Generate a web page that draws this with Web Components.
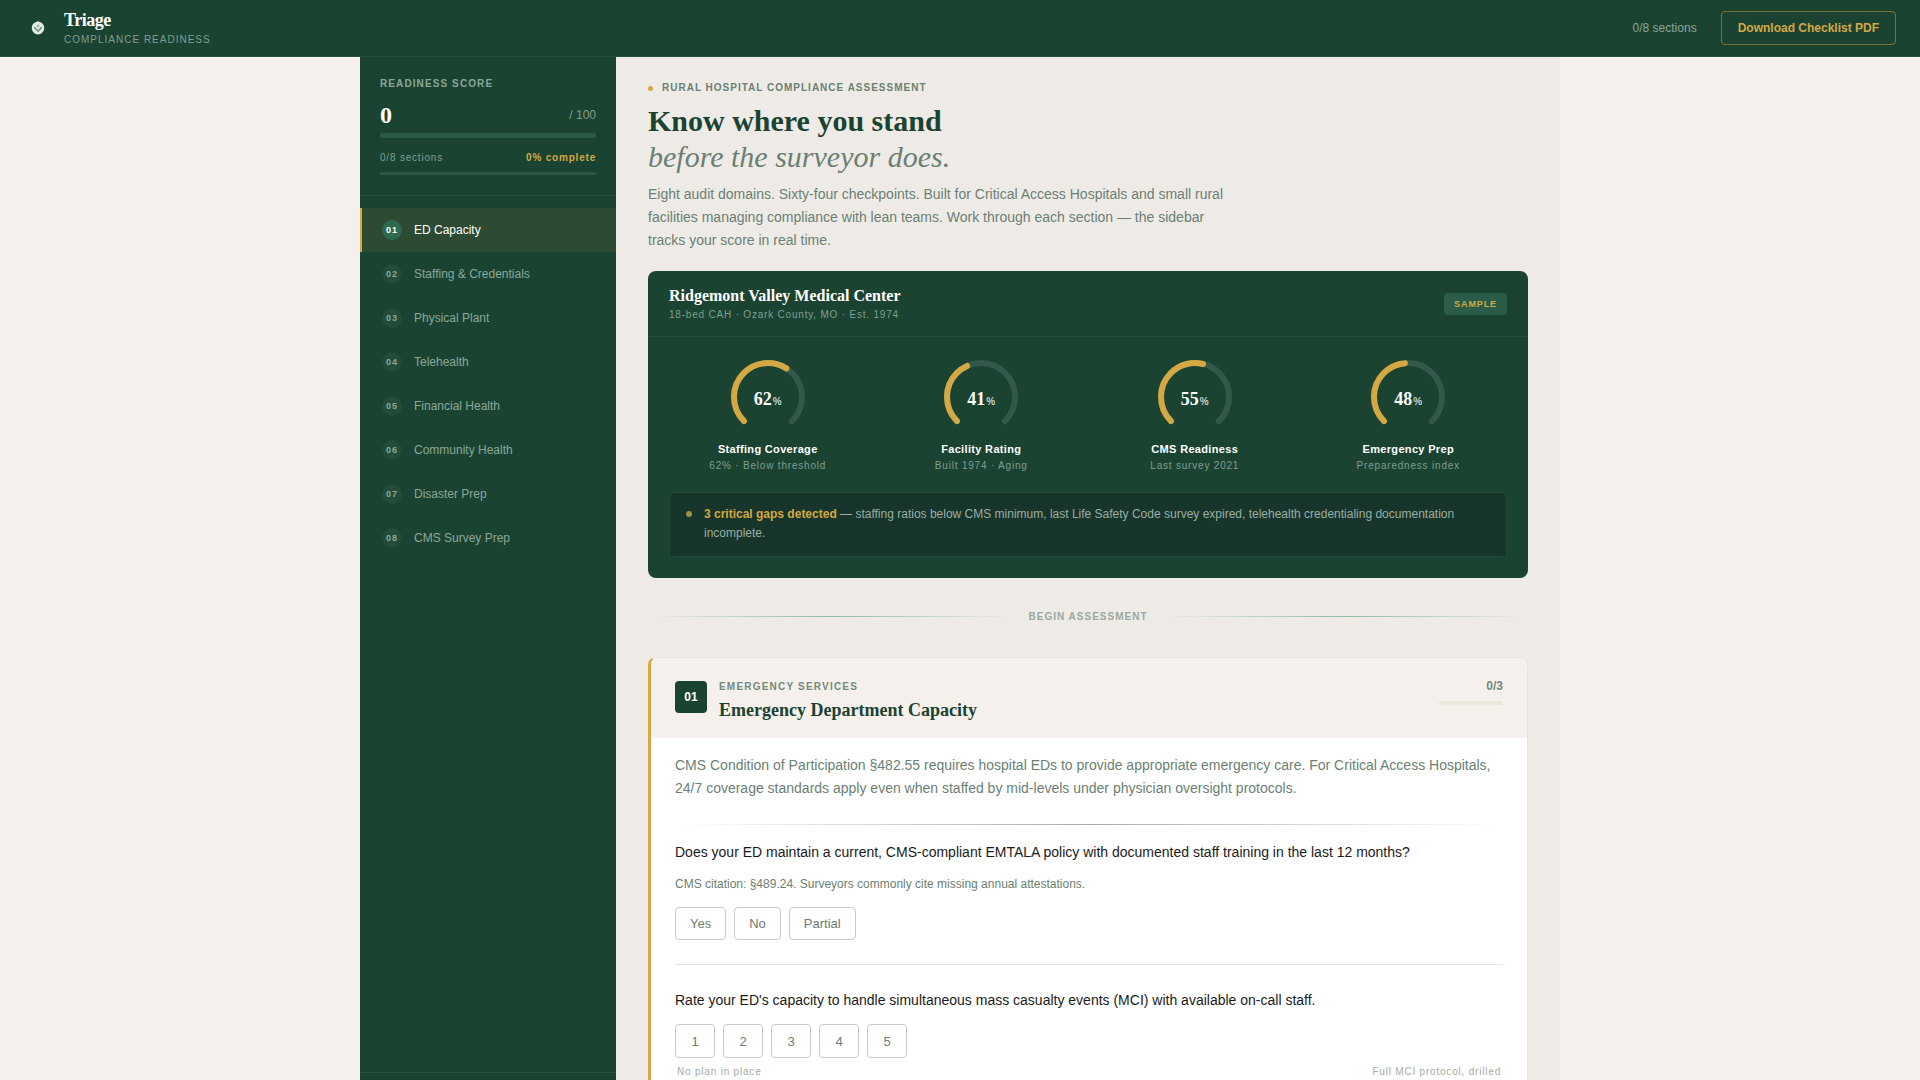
<!DOCTYPE html>
<html lang="en">
<head>
<meta charset="utf-8">
<title>Triage</title>
<style>
  html, body { margin: 0; height: 100%; overflow: hidden; }
  body {
    background: #f5f0eb;
    font-family: "Liberation Sans", Arial, sans-serif;
    display: flex;
    flex-direction: column;
  }
  .shell {
    flex: 1;
    min-height: 0;
    width: 1200px;
    margin: 0 auto;
    display: flex;
  }
</style>
</head>
<body>
  <app-header sections="0/8 sections"></app-header>
  <div class="shell">
    <side-bar>
      <score-panel></score-panel>
      <nav-item num="01" active>ED Capacity</nav-item>
      <nav-item num="02">Staffing &amp; Credentials</nav-item>
      <nav-item num="03">Physical Plant</nav-item>
      <nav-item num="04">Telehealth</nav-item>
      <nav-item num="05">Financial Health</nav-item>
      <nav-item num="06">Community Health</nav-item>
      <nav-item num="07">Disaster Prep</nav-item>
      <nav-item num="08">CMS Survey Prep</nav-item>
    </side-bar>
    <main-area>
      <hero-intro></hero-intro>
      <facility-card>
        <gauge-dial value="62" label="Staffing Coverage" note="62% · Below threshold"></gauge-dial>
        <gauge-dial value="41" label="Facility Rating" note="Built 1974 · Aging"></gauge-dial>
        <gauge-dial value="55" label="CMS Readiness" note="Last survey 2021"></gauge-dial>
        <gauge-dial value="48" label="Emergency Prep" note="Preparedness index"></gauge-dial>
      </facility-card>
      <section-rule>BEGIN ASSESSMENT</section-rule>
      <section-card num="01" eyebrow="EMERGENCY SERVICES" heading="Emergency Department Capacity" count="0/3">
        <p slot="intro">CMS Condition of Participation §482.55 requires hospital EDs to provide appropriate emergency care. For Critical Access Hospitals, 24/7 coverage standards apply even when staffed by mid-levels under physician oversight protocols.</p>
        <check-question text="Does your ED maintain a current, CMS-compliant EMTALA policy with documented staff training in the last 12 months?" hint="CMS citation: §489.24. Surveyors commonly cite missing annual attestations." options="Yes,No,Partial"></check-question>
        <check-question scale text="Rate your ED's capacity to handle simultaneous mass casualty events (MCI) with available on-call staff." options="1,2,3,4,5" low="No plan in place" high="Full MCI protocol, drilled"></check-question>
      </section-card>
    </main-area>
  </div>

<script>
const appHeaderTemplate = document.createElement("template");
appHeaderTemplate.innerHTML = `
  <style>
    :host {
      display: flex;
      flex: none;
      align-items: center;
      height: 56px;
      padding: 0 24px;
      background: #1b4332;
      border-bottom: 1px solid #27503e;
    }
    .logo { width: 28px; height: 28px; display: flex; align-items: center; justify-content: center; margin-right: 12px; }
    .brand { flex: 1; }
    .name {
      font: bold 18px/20px "Liberation Serif", "Times New Roman", serif;
      letter-spacing: -0.5px;
      color: #fff;
    }
    .sub { font-size: 10px; line-height: 14px; letter-spacing: 1px; color: #7f9f8f; margin-top: 3px; }
    .sections { font-size: 12px; color: #8aa898; margin-right: 24px; }
    button {
      font: bold 12px "Liberation Sans", Arial, sans-serif;
      height: 34px;
      padding: 0 16px;
      color: #d4a843;
      background: transparent;
      border: 1px solid rgba(212, 168, 67, 0.5);
      border-radius: 4px;
    }
  </style>
  <div class="logo">
    <svg width="14" height="14" viewBox="0 0 14 14">
      <path d="M7 0.3 L9.6 1.2 C12 2 13.2 4.4 13.2 7 C13.2 10.6 10.4 13.4 7 13.4 C3.6 13.4 0.8 10.6 0.8 7 C0.8 4.4 2 2 4.4 1.2 Z" fill="#e3ebe0"/>
      <path d="M3.2 6.2 L7 10.2 L10.8 6.2" fill="none" stroke="#5f8c76" stroke-width="1.4"/>
      <circle cx="7" cy="5" r="1.5" fill="#9db8a9"/>
    </svg>
  </div>
  <div class="brand">
    <div class="name">Triage</div>
    <div class="sub">COMPLIANCE READINESS</div>
  </div>
  <span class="sections"></span>
  <button>Download Checklist PDF</button>
`;

class AppHeader extends HTMLElement {
  constructor() {
    super();
    this.attachShadow({ mode: "open" });
    this.shadowRoot.appendChild(appHeaderTemplate.content.cloneNode(true));
    this.shadowRoot.querySelector(".sections").textContent = this.getAttribute("sections");
  }
}
customElements.define("app-header", AppHeader);

const sideBarTemplate = document.createElement("template");
sideBarTemplate.innerHTML = `
  <style>
    :host {
      display: flex;
      flex-direction: column;
      flex: none;
      width: 256px;
      background: #1b4332;
    }
    .nav { flex: 1; }
    .foot { height: 8px; border-top: 1px solid #2a5341; box-sizing: border-box; flex: none; }
  </style>
  <div class="nav"><slot></slot></div>
  <div class="foot"></div>
`;

class SideBar extends HTMLElement {
  constructor() {
    super();
    this.attachShadow({ mode: "open" });
    this.shadowRoot.appendChild(sideBarTemplate.content.cloneNode(true));
  }
}
customElements.define("side-bar", SideBar);

const scorePanelTemplate = document.createElement("template");
scorePanelTemplate.innerHTML = `
  <style>
    :host {
      display: block;
      padding: 21px 20px 0;
      height: 139px;
      box-sizing: border-box;
      margin-bottom: 12px;
      border-bottom: 1px solid #27503e;
    }
    .label { font-size: 10px; line-height: 12px; font-weight: bold; letter-spacing: 1.1px; color: #8aa898; }
    .score { display: flex; justify-content: space-between; align-items: center; margin-top: 11px; height: 28px; }
    .score b { font: bold 24px/28px "Liberation Serif", serif; color: #fff; }
    .score span { font-size: 12px; color: #7f9f8f; }
    .track { background: #2a5a45; border-radius: 3px; }
    .t1 { height: 5px; margin-top: 4px; }
    .meta { display: flex; justify-content: space-between; font-size: 10px; line-height: 12px; letter-spacing: 0.8px; color: #7f9f8f; margin-top: 14px; }
    .meta b { color: #d4a843; }
    .t2 { height: 3px; margin-top: 8px; }
  </style>
  <div class="label">READINESS SCORE</div>
  <div class="score"><b>0</b><span>/ 100</span></div>
  <div class="track t1"></div>
  <div class="meta"><span>0/8 sections</span><b>0% complete</b></div>
  <div class="track t2"></div>
`;

class ScorePanel extends HTMLElement {
  constructor() {
    super();
    this.attachShadow({ mode: "open" });
    this.shadowRoot.appendChild(scorePanelTemplate.content.cloneNode(true));
  }
}
customElements.define("score-panel", ScorePanel);

const navItemTemplate = document.createElement("template");
navItemTemplate.innerHTML = `
  <style>
    :host {
      display: flex;
      align-items: center;
      height: 44px;
      padding-left: 20px;
      border-left: 2px solid transparent;
      font-size: 12px;
      color: #8aa898;
    }
    :host([active]) {
      border-left-color: #d4a843;
      background: #2d4a32;
      color: #fff;
    }
    .num {
      width: 20px;
      height: 20px;
      margin-right: 12px;
      border-radius: 50%;
      display: flex;
      align-items: center;
      justify-content: center;
      font-size: 9px;
      font-weight: bold;
      letter-spacing: 0.9px;
      background: #234d3a;
      color: #8aa898;
    }
    :host([active]) .num { background: #2d6a4f; color: #fff; }
  </style>
  <span class="num"></span><slot></slot>
`;

class NavItem extends HTMLElement {
  constructor() {
    super();
    this.attachShadow({ mode: "open" });
    this.shadowRoot.appendChild(navItemTemplate.content.cloneNode(true));
    this.shadowRoot.querySelector(".num").textContent = this.getAttribute("num");
  }
}
customElements.define("nav-item", NavItem);

const mainAreaTemplate = document.createElement("template");
mainAreaTemplate.innerHTML = `
  <style>
    :host {
      display: block;
      flex: 1;
      min-width: 0;
      overflow: hidden;
      padding: 25px 32px 0;
      background: #eeebe6;
    }
  </style>
  <slot></slot>
`;

class MainArea extends HTMLElement {
  constructor() {
    super();
    this.attachShadow({ mode: "open" });
    this.shadowRoot.appendChild(mainAreaTemplate.content.cloneNode(true));
  }
}
customElements.define("main-area", MainArea);

const heroIntroTemplate = document.createElement("template");
heroIntroTemplate.innerHTML = `
  <style>
    :host { display: block; margin-bottom: 19px; }
    .eyebrow {
      display: flex;
      align-items: center;
      gap: 9px;
      font-size: 10px;
      line-height: 12px;
      font-weight: bold;
      letter-spacing: 1px;
      color: #6b7f74;
    }
    .eyebrow i { width: 5px; height: 5px; border-radius: 50%; background: #d4a843; }
    h1 {
      margin: 9px 0 8px;
      font: bold 30px/36px "Liberation Serif", serif;
      color: #1b4332;
    }
    h1 em { display: block; font-weight: normal; color: #6b7f74; }
    p { margin: 0; max-width: 580px; font-size: 14px; line-height: 23px; color: #6b7f74; }
  </style>
  <div class="eyebrow"><i></i>RURAL HOSPITAL COMPLIANCE ASSESSMENT</div>
  <h1>Know where you stand<em>before the surveyor does.</em></h1>
  <p>Eight audit domains. Sixty-four checkpoints. Built for Critical Access Hospitals and small rural facilities managing compliance with lean teams. Work through each section — the sidebar tracks your score in real time.</p>
`;

class HeroIntro extends HTMLElement {
  constructor() {
    super();
    this.attachShadow({ mode: "open" });
    this.shadowRoot.appendChild(heroIntroTemplate.content.cloneNode(true));
  }
}
customElements.define("hero-intro", HeroIntro);

const facilityCardTemplate = document.createElement("template");
facilityCardTemplate.innerHTML = `
  <style>
    :host {
      display: block;
      height: 307px;
      box-sizing: border-box;
      background: #1b4332;
      border-radius: 8px;
      color: #fff;
    }
    .head {
      display: flex;
      align-items: center;
      justify-content: space-between;
      height: 65px;
      padding: 0 21px;
      border-bottom: 1px solid #27503e;
    }
    h2 { margin: 0; font: bold 16px/20px "Liberation Serif", serif; color: #fff; }
    .meta { font-size: 10px; line-height: 14px; letter-spacing: 0.8px; color: #7f9f8f; margin-top: 2px; }
    .tag {
      font-size: 9px;
      font-weight: bold;
      letter-spacing: 0.9px;
      line-height: 12px;
      padding: 5px 10px;
      color: #d4a843;
      background: #2a5c47;
      border-radius: 4px;
    }
    .gauges {
      display: grid;
      grid-template-columns: repeat(4, 1fr);
      gap: 16px;
      padding: 20px 21px 0;
    }
    .alert {
      display: flex;
      margin: 19px 21px 0;
      padding: 12px 16px 0 14px;
      height: 65px;
      box-sizing: border-box;
      background: #17352a;
      border: 1px solid #24483a;
      border-radius: 4px;
      font-size: 12px;
      line-height: 19px;
      color: #9aaea5;
    }
    .alert i {
      flex: none;
      width: 6px;
      height: 6px;
      margin: 6px 12px 0 2px;
      border-radius: 50%;
      background: #a08f4a;
    }
    .alert b { color: #d4a843; }
  </style>
  <div class="head">
    <div>
      <h2>Ridgemont Valley Medical Center</h2>
      <div class="meta">18-bed CAH · Ozark County, MO · Est. 1974</div>
    </div>
    <span class="tag">SAMPLE</span>
  </div>
  <div class="gauges"><slot></slot></div>
  <div class="alert"><i></i><span><b>3 critical gaps detected</b> — staffing ratios below CMS minimum, last Life Safety Code survey expired, telehealth credentialing documentation incomplete.</span></div>
`;

class FacilityCard extends HTMLElement {
  constructor() {
    super();
    this.attachShadow({ mode: "open" });
    this.shadowRoot.appendChild(facilityCardTemplate.content.cloneNode(true));
  }
}
customElements.define("facility-card", FacilityCard);

const gaugeDialTemplate = document.createElement("template");
gaugeDialTemplate.innerHTML = `
  <style>
    :host { display: block; text-align: center; }
    .dial { position: relative; width: 80px; height: 80px; margin: 0 auto; }
    svg { display: block; transform: rotate(135deg); }
    circle { fill: none; stroke-width: 6; stroke-linecap: round; }
    .bg { stroke: #34594a; }
    .fg { stroke: #d4a843; }
    .value {
      position: absolute;
      left: 0;
      right: 0;
      top: 31px;
      font: bold 18px/22px "Liberation Serif", serif;
      color: #fff;
    }
    .value small { font: bold 10px "Liberation Sans", Arial, sans-serif; color: #c3d4ca; margin-left: 1px; }
    .label { font-size: 11px; line-height: 14px; font-weight: bold; letter-spacing: 0.33px; color: #fff; margin-top: 5px; }
    .note { font-size: 10px; line-height: 14px; letter-spacing: 0.8px; color: #7f9f8f; margin-top: 3px; }
  </style>
  <div class="dial">
    <svg width="80" height="80" viewBox="0 0 80 80">
      <circle class="bg" cx="40" cy="40" r="34"></circle>
      <circle class="fg" cx="40" cy="40" r="34"></circle>
    </svg>
    <div class="value"></div>
  </div>
  <div class="label"></div>
  <div class="note"></div>
`;

class GaugeDial extends HTMLElement {
  constructor() {
    super();
    this.attachShadow({ mode: "open" });
    this.shadowRoot.appendChild(gaugeDialTemplate.content.cloneNode(true));
    this.render();
  }

  render() {
    const root = this.shadowRoot;
    const value = Number(this.getAttribute("value"));
    const full = 2 * Math.PI * 34;
    const arc = full * 0.75;
    root.querySelector(".bg").setAttribute("stroke-dasharray", `${ arc } ${ full }`);
    root.querySelector(".fg").setAttribute("stroke-dasharray", `${ arc * value / 100 } ${ full }`);
    root.querySelector(".value").innerHTML = `${ value }<small>%</small>`;
    root.querySelector(".label").textContent = this.getAttribute("label");
    root.querySelector(".note").textContent = this.getAttribute("note");
  }
}
customElements.define("gauge-dial", GaugeDial);

const sectionRuleTemplate = document.createElement("template");
sectionRuleTemplate.innerHTML = `
  <style>
    :host {
      display: flex;
      align-items: center;
      gap: 16px;
      height: 12px;
      margin: 32px 0 35px;
      font-size: 10px;
      font-weight: bold;
      letter-spacing: 1px;
      color: #9aa89f;
    }
    i { flex: 1; height: 1px; background: linear-gradient(90deg, transparent, #8fbb9f, transparent); }
  </style>
  <i></i><slot></slot><i></i>
`;

class SectionRule extends HTMLElement {
  constructor() {
    super();
    this.attachShadow({ mode: "open" });
    this.shadowRoot.appendChild(sectionRuleTemplate.content.cloneNode(true));
  }
}
customElements.define("section-rule", SectionRule);

const sectionCardTemplate = document.createElement("template");
sectionCardTemplate.innerHTML = `
  <style>
    :host {
      display: block;
      background: #fff;
      border: 1px solid #e9e5de;
      border-left: 3px solid #d4a843;
      border-radius: 8px;
    }
    .head {
      display: flex;
      align-items: flex-start;
      gap: 12px;
      height: 80px;
      padding: 23px 24px 0;
      box-sizing: border-box;
      background: #f5f0eb;
      border-radius: 7px 7px 0 0;
    }
    .badge {
      flex: none;
      width: 32px;
      height: 32px;
      border-radius: 4px;
      display: flex;
      align-items: center;
      justify-content: center;
      font-size: 12px;
      font-weight: bold;
      color: #fff;
      background: #1b4332;
    }
    .titles { flex: 1; }
    .eyebrow { font-size: 10px; line-height: 12px; font-weight: bold; letter-spacing: 1.2px; color: #748a7e; }
    h3 { margin: 6px 0 0; font: bold 18px/22px "Liberation Serif", serif; color: #1b4332; }
    .progress { width: 64px; text-align: right; }
    .count { font-size: 12px; line-height: 12px; font-weight: bold; color: #748a7e; margin-top: -1px; }
    .bar { height: 4px; margin-top: 9px; background: #ebe5da; border-radius: 2px; }
    .body { padding: 16px 24px 0; }
    ::slotted(p) {
      margin: 0 0 24px;
      font-size: 14px;
      line-height: 23px;
      color: #6b7f74;
    }
    .rule { height: 1px; margin-bottom: 17px; background: linear-gradient(90deg, transparent, #a8aca8, transparent); }
  </style>
  <div class="head">
    <div class="badge"></div>
    <div class="titles">
      <div class="eyebrow"></div>
      <h3></h3>
    </div>
    <div class="progress">
      <div class="count"></div>
      <div class="bar"></div>
    </div>
  </div>
  <div class="body">
    <slot name="intro"></slot>
    <div class="rule"></div>
    <slot></slot>
  </div>
`;

class SectionCard extends HTMLElement {
  constructor() {
    super();
    this.attachShadow({ mode: "open" });
    this.shadowRoot.appendChild(sectionCardTemplate.content.cloneNode(true));
    const root = this.shadowRoot;
    root.querySelector(".badge").textContent = this.getAttribute("num");
    root.querySelector(".eyebrow").textContent = this.getAttribute("eyebrow");
    root.querySelector("h3").textContent = this.getAttribute("heading");
    root.querySelector(".count").textContent = this.getAttribute("count");
  }
}
customElements.define("section-card", SectionCard);

const checkQuestionTemplate = document.createElement("template");
checkQuestionTemplate.innerHTML = `
  <style>
    :host { display: block; padding-bottom: 24px; margin-bottom: 25px; border-bottom: 1px solid #e8e4dc; }
    :host([scale]) { border-bottom: 0; }
    .text { font-size: 14px; line-height: 21px; color: #1a1a1a; }
    .hint { font-size: 12px; line-height: 18px; color: #6b7f74; margin-top: 12px; }
    .options { display: flex; gap: 8px; margin-top: 14px; }
    :host([scale]) .options { margin-top: 13px; }
    button {
      font: 13px/15px "Liberation Sans", Arial, sans-serif;
      height: 33px;
      padding: 0 14px;
      color: #6f7b75;
      background: #fff;
      border: 1px solid #c9ccc8;
      border-radius: 4px;
    }
    :host([scale]) button { width: 40px; height: 34px; padding: 0; }
    .ends {
      display: flex;
      justify-content: space-between;
      padding: 0 2px;
      margin-top: 8px;
      font-size: 10px;
      line-height: 12px;
      letter-spacing: 0.8px;
      color: #a3aba6;
    }
  </style>
  <div class="text"></div>
  <div class="hint"></div>
  <div class="options"></div>
  <div class="ends"><span class="low"></span><span class="high"></span></div>
`;

class CheckQuestion extends HTMLElement {
  constructor() {
    super();
    this.attachShadow({ mode: "open" });
    this.shadowRoot.appendChild(checkQuestionTemplate.content.cloneNode(true));
    this.render();
  }

  render() {
    const root = this.shadowRoot;
    root.querySelector(".text").textContent = this.getAttribute("text");
    const hint = this.getAttribute("hint");
    if (hint) root.querySelector(".hint").textContent = hint;
    else root.querySelector(".hint").remove();
    root.querySelector(".options").innerHTML = this.getAttribute("options")
      .split(",")
      .map(option => `<button>${ option }</button>`)
      .join("");
    if (this.hasAttribute("low")) {
      root.querySelector(".low").textContent = this.getAttribute("low");
      root.querySelector(".high").textContent = this.getAttribute("high");
    } else {
      root.querySelector(".ends").remove();
    }
  }
}
customElements.define("check-question", CheckQuestion);
</script>
</body>
</html>
